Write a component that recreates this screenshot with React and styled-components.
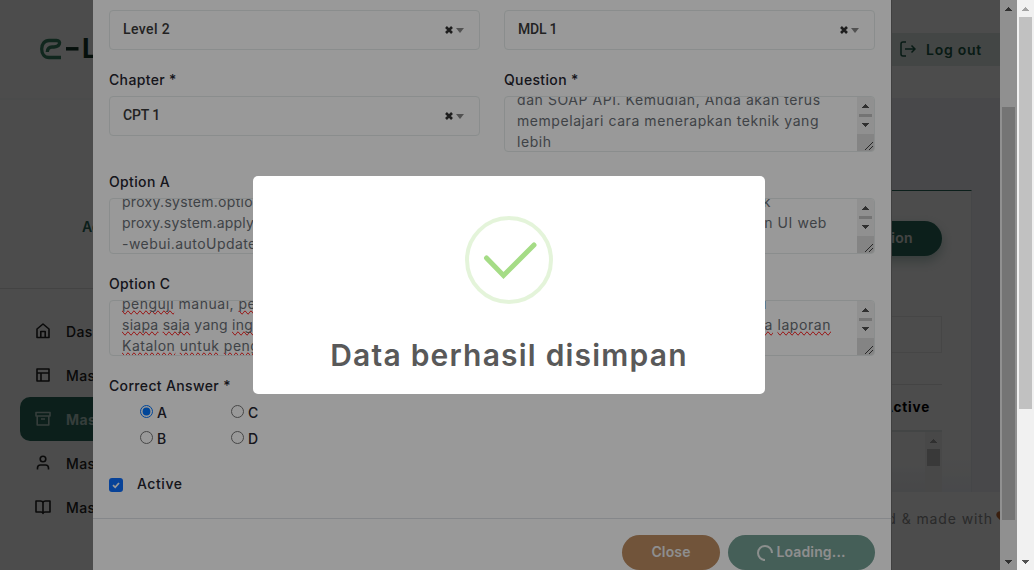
import React from "react";
import styled, { createGlobalStyle, css } from "styled-components";

const brand = "#286b5c";

const GlobalStyle = createGlobalStyle`
  *, *::before, *::after { box-sizing: border-box; }
  html, body { margin: 0; height: 100%; overflow: hidden; background: #fff; }
  body { font-family: Inter, "Liberation Sans", sans-serif; font-size: 14px; color: #222; }
`;

/* ---------- shell ---------- */
const Screen = styled.div`
  display: flex;
  width: 1034px;
  height: 570px;
  overflow: hidden;
`;
const Viewport = styled.div`
  position: relative;
  width: 1017px;
  height: 570px;
  overflow: hidden;
`;
const Backdrop = styled.div`
  position: absolute;
  inset: 0;
  background: rgba(0, 0, 0, ${(p) => p.$alpha});
`;

/* ---------- scrollbars ---------- */
const Track = styled.div`
  display: flex;
  flex-direction: column;
  align-items: center;
  flex: none;
  width: 17px;
  height: ${(p) => p.$height}px;
  background: #f1f1f1;
`;
const ArrowBox = styled.div`
  display: flex;
  align-items: center;
  justify-content: center;
  height: 17px;
  padding-bottom: ${(p) => p.$lift || 0}px;
  flex: none;
  color: ${(p) => p.$color || "#505050"};
  svg { display: block; ${(p) => p.$down && "transform: rotate(180deg);"} }
`;
const Thumb = styled.div`
  width: 13px;
  height: ${(p) => p.$height}px;
  margin-top: ${(p) => p.$top || 0}px;
  background: ${(p) => p.$color || "#c1c1c1"};
`;
const Spacer = styled.div`flex: 1;`;

function Arrow({ down, color, lift }) {
  return (
    <ArrowBox $down={down} $color={color} $lift={lift}>
      <svg width="7" height="4" viewBox="0 0 7 4" fill="currentColor" shapeRendering="crispEdges">
        <path d="M3 0h1v1h1v1h1v1h1v1H0V3h1V2h1V1h1z" />
      </svg>
    </ArrowBox>
  );
}

/* ---------- page behind the modal ---------- */
const Page = styled.div`
  width: 1000px;
  height: 570px;
  display: flex;
  flex-direction: column;
  background: #fff;
`;
const Header = styled.header`
  display: flex;
  justify-content: space-between;
  height: 98px;
  padding: 33px 0 0 40px;
`;
const Logo = styled.div`
  display: flex;
  gap: 3px;
  height: 32px;
  align-items: center;
  font: 700 27px/32px Inter, sans-serif;
  color: #17392b;
  svg { display: block; }
`;
const LogOut = styled.div`
  display: flex;
  align-items: center;
  gap: 10px;
  height: 33px;
  width: 120px;
  padding: 0 0 1px 20px;
  background: #e3ece8;
  color: #1c5a49;
  font-weight: 600;
  font-size: 14px;
  letter-spacing: 0.75px;
`;
const Body = styled.div`
  display: flex;
  height: 394px;
`;
const Sidebar = styled.aside`
  width: 250px;
  flex: none;
  height: 472px;
`;
const UserBlock = styled.div`
  height: 191px;
  padding: 117px 0 0 82px;
  border-top: 2px solid #f8fbfb;
  border-bottom: 1px solid #e2e2e2;
  color: ${brand};
  font-weight: 600;
  line-height: 20px;
`;
const Nav = styled.nav`padding: 20px 0 0 20px;`;
const NavItem = styled.div`
  display: flex;
  align-items: center;
  gap: 15px;
  height: 44px;
  padding-left: 15px;
  border-radius: 10px;
  font-weight: 500;
  letter-spacing: 0.4px;
  color: ${(p) => (p.$active ? "#b4cec7" : "#222")};
  background: ${(p) => (p.$active ? brand : "transparent")};
`;
const Main = styled.main`
  flex: 1;
  padding: 92px 28px 0 0;
  background: #f0f3f8;
`;
const Card = styled.section`
  height: 302px;
  padding: 30px 29px 0 0;
  display: flex;
  flex-direction: column;
  align-items: flex-end;
  border-top: 1px solid ${brand};
  border-right: 1px solid #e6eaf0;
  background: linear-gradient(#fff 265px, #f2f5fa 302px);
`;
const AddButton = styled.div`
  width: 170px;
  height: 35px;
  flex: none;
  padding-right: 29px;
  border-radius: 18px;
  background: ${brand};
  color: #e3e3e3;
  font-weight: 600;
  letter-spacing: 0.3px;
  line-height: 34px;
  text-align: right;
  box-shadow: 0 5px 12px rgba(40, 107, 92, 0.35);
`;
const SearchBox = styled.div`
  width: 200px;
  height: 37px;
  flex: none;
  margin: 60px 0 31px;
  border: 1px solid #ececec;
`;
const TableHead = styled.div`
  width: 200px;
  height: 46px;
  flex: none;
  padding: 12px 12px 0 0;
  border-top: 1px solid #e5e5e5;
  color: #000;
  font-weight: 700;
  font-size: 13.5px;
  letter-spacing: 0.8px;
  line-height: 20px;
  text-align: right;
`;
const TableBody = styled.div`
  display: flex;
  justify-content: flex-end;
  width: 200px;
  height: 62px;
  border-top: 2px solid #e3e8e8;
  background: linear-gradient(#fcfcfc 30px, #eef0f5);
`;
const Footer = styled.footer`
  display: flex;
  align-items: center;
  justify-content: flex-end;
  height: 52px;
  margin-right: -12px;
`;
const FootNote = styled.div`
  display: flex;
  align-items: center;
  gap: 3px;
  flex: none;
  color: #8e8e8e;
  letter-spacing: 0.9px;
  white-space: nowrap;
  svg { flex: none; }
`;

/* ---------- modal ---------- */
const ModalLayer = styled.div`
  position: absolute;
  inset: 0;
  display: flex;
  justify-content: space-between;
  padding-left: 93px;
`;
const Modal = styled.div`
  width: 799px;
  height: 571px;
  background: #fff;
  border-right: 1px solid #6c6c6c;
`;
const Form = styled.div`
  display: grid;
  grid-template-columns: 371px 371px;
  gap: 20px 24px;
  height: 518px;
  padding: 10px 16px 0;
  align-content: start;
`;
const Field = styled.div`
  display: flex;
  flex-direction: column;
  gap: 5px;
`;
const Label = styled.div`
  height: 21px;
  line-height: 19px;
  font-weight: 500;
  color: #25252f;
  letter-spacing: 0.35px;
`;
const SelectBox = styled.div`
  display: flex;
  align-items: center;
  height: 40px;
  padding: 0 15px 2px 13px;
  border: 1px solid #e6eceb;
  border-radius: 4px;
  font: 500 14px Roboto, sans-serif;
  letter-spacing: ${(p) => p.$ls ?? 0}px;
  color: #3a3a3a;
`;
const SelectIcons = styled.div`
  display: flex;
  align-items: center;
  gap: 3px;
  margin-left: auto;
  padding-top: 2px;
`;
const Area = styled.div`
  display: flex;
  height: 56px;
  border: 1px solid #e6eceb;
  border-radius: 4px;
  overflow: hidden;
`;
const AreaText = styled.div`
  flex: 1;
  margin-top: -8px;
  padding-left: 12px;
  font-size: 14px;
  line-height: 21px;
  color: #6a6f76;
  white-space: nowrap;
`;
const Line = styled.div`
  height: 21px;
  letter-spacing: ${(p) => p.$ls ?? 0.56}px;
  ${(p) => p.$end && css`width: ${p.$end}px; text-align: right;`}
`;
const Miss = styled.span`
  text-decoration-line: spelling-error;
`;
const Grip = styled.div`
  display: flex;
  align-items: flex-end;
  justify-content: flex-end;
  width: 17px;
  height: 17px;
  background: #dcdcdc;
  svg { display: block; }
`;
const Answers = styled.div`
  display: grid;
  grid-template-columns: 91px 91px;
  padding-left: 31px;
  margin-top: -3px;
`;
const Answer = styled.label`
  display: flex;
  align-items: center;
  gap: 4px;
  height: 26px;
  font-weight: 500;
  color: #25252f;
  input { width: 13px; height: 13px; margin: 0 0 2px; }
`;
const Check = styled.div`
  display: flex;
  align-items: center;
  gap: 14px;
  height: 21px;
  margin-top: 2px;
  font-weight: 500;
  letter-spacing: 0.55px;
  color: #25252f;
`;
const Tick = styled.div`
  display: flex;
  align-items: center;
  justify-content: center;
  width: 14px;
  height: 14px;
  margin-top: 2px;
  border-radius: 3px;
  background: #0d6efd;
`;
const ModalFooter = styled.div`
  display: flex;
  justify-content: flex-end;
  gap: 8px;
  padding: 16px 16px 0;
  border-top: 1px solid #dee2e6;
`;
const Button = styled.div`
  display: flex;
  align-items: center;
  justify-content: center;
  gap: 3px;
  width: ${(p) => p.$width}px;
  height: 35px;
  padding-bottom: 2px;
  border-radius: 18px;
  background: ${(p) => p.$bg};
  color: #ededed;
  font-weight: 600;
  letter-spacing: 0.15px;
  svg { display: block; margin-top: 2px; }
`;

/* ---------- success dialog ---------- */
const AlertLayer = styled.div`
  position: absolute;
  inset: 0;
  padding: 176px 0 0 253px;
`;
const Alert = styled.div`
  display: flex;
  flex-direction: column;
  align-items: center;
  width: 512px;
  height: 218px;
  padding-top: 40px;
  border-radius: 5px;
  background: #fff;
`;
const AlertTitle = styled.div`
  margin-top: 33px;
  font-size: 30px;
  line-height: 36px;
  font-weight: 600;
  letter-spacing: 1.2px;
  color: #595959;
  white-space: nowrap;
`;

const NavIcon = ({ children }) => (
  <svg width="16" height="18" viewBox="0 0 16 18" fill="none" stroke="currentColor" strokeWidth="1.6" strokeLinejoin="round">
    {children}
  </svg>
);

function Select({ value, ls }) {
  return (
    <SelectBox $ls={ls}>
      {value}
      <SelectIcons>
        <svg width="8" height="8" viewBox="0 0 8 8" stroke="#333" strokeWidth="2.6">
          <path d="M1 1l6 6M7 1L1 7" />
        </svg>
        <svg width="8" height="5" viewBox="0 0 8 5" fill="#888"><path d="M0 0h8L4 5z" /></svg>
      </SelectIcons>
    </SelectBox>
  );
}

function TextArea({ children }) {
  return (
    <Area>
      <AreaText>{children}</AreaText>
      <Track $height={54}>
        <Arrow />
        <Thumb $height={3} />
        <Arrow down lift={2} />
        <Grip>
          <svg width="10" height="10" viewBox="0 0 10 10" stroke="#444" strokeWidth="1" shapeRendering="crispEdges">
            <path d="M1 9L9 1M5 9L9 5" />
          </svg>
        </Grip>
      </Track>
    </Area>
  );
}

export default function App() {
  return (
    <Screen>
      <GlobalStyle />
      <Viewport>
        <Page>
          <Header>
            <Logo>
              <svg width="39" height="22" viewBox="0 0 39 22" fill="none">
                <path d="M21 19.500H9C4.500 19.500 1.700 16 1.700 11S4.500 2.500 9 2.500H16.500C19 2.500 20.200 4.200 19.300 6.200C18.400 8.400 17 9 14 9H12C9 9 7.500 11 7.300 14" stroke="#3a8466" strokeWidth="3.300" />
                <path d="M26 10.800H38.500" stroke="#17392b" strokeWidth="3.500" />
              </svg>
              L
            </Logo>
            <LogOut>
              <svg width="16" height="16" viewBox="0 0 16 16" fill="none" stroke="currentColor" strokeWidth="1.500">
                <path d="M6 1H3Q1 1 1 3V13Q1 15 3 15H6M5 8H15M11.500 4.500L15 8L11.500 11.500" />
              </svg>
              Log out
            </LogOut>
          </Header>
          <Body>
            <Sidebar>
              <UserBlock>Admin</UserBlock>
              <Nav>
                <NavItem>
                  <NavIcon><path d="M2 7L8 2L14 7V15.500H2zM5.800 15.500V9.500H10.200V15.500" /></NavIcon>
                  Dashboard
                </NavItem>
                <NavItem>
                  <NavIcon><path d="M2 3H14V15H2zM2 7H14M6 7V15" /></NavIcon>
                  Master
                </NavItem>
                <NavItem $active>
                  <NavIcon><path d="M1 2.500H15V6H1zM2.200 6V15H13.800V6M6 9H10" /></NavIcon>
                  <b>Master</b>
                </NavItem>
                <NavItem>
                  <NavIcon><circle cx="8" cy="5" r="2.800" /><path d="M2.500 15.500V14Q2.500 11 5.500 11H10.500Q13.500 11 13.500 14V15.500" /></NavIcon>
                  Master
                </NavItem>
                <NavItem>
                  <NavIcon><path d="M8 4.500Q7.500 3 5.500 3H1V14H6Q8 14 8 15.500Q8 14 10 14H15V3H10.500Q8.500 3 8 4.500V15" /></NavIcon>
                  Master
                </NavItem>
              </Nav>
            </Sidebar>
            <Main>
              <Card>
                <AddButton>Question</AddButton>
                <SearchBox />
                <TableHead>Active</TableHead>
                <TableBody>
                  <Track $height={60}>
                    <Arrow color="#a0a0a0" />
                    <Thumb $height={17} />
                  </Track>
                </TableBody>
              </Card>
            </Main>
          </Body>
          <Footer>
            <FootNote>
              crafted &amp; made with
              <svg width="16" height="14" viewBox="0 0 16 14" fill="#c26b35"><path d="M8 13L1 6Q-1 2 2.500 .5Q6 -.5 8 3Q10 -.5 13.500 .5Q17 2 15 6z" /></svg>
            </FootNote>
          </Footer>
        </Page>

        <Backdrop $alpha={0.5} />
        <ModalLayer>
          <Modal>
            <Form>
              <Select value="Level 2" ls={0.4} />
              <Select value="MDL 1" ls={-0.2} />

              <Field>
                <Label>Chapter *</Label>
                <Select value="CPT 1" ls={-0.1} />
              </Field>
              <Field>
                <Label>Question *</Label>
                <TextArea>
                  <Line>dan SOAP API. Kemudian, Anda akan terus</Line>
                  <Line>mempelajari cara menerapkan teknik yang</Line>
                  <Line>lebih</Line>
                </TextArea>
              </Field>

              <Field>
                <Label>Option A</Label>
                <TextArea>
                  <Line $ls={0.3}>proxy.system.option</Line>
                  <Line $ls={0.2}>proxy.system.apply</Line>
                  <Line $ls={0.45}>-webui.autoUpdate</Line>
                </TextArea>
              </Field>
              <Field>
                <Label>Option B</Label>
                <TextArea>
                  <Line $end={254}>untuk</Line>
                  <Line $end={310}>dan UI web</Line>
                </TextArea>
              </Field>

              <Field>
                <Label>Option C</Label>
                <TextArea>
                  <Line $ls={0.5}><Miss>penguji</Miss> manual, <Miss>penguji</Miss></Line>
                  <Line $ls={0.25}><Miss>siapa</Miss> <Miss>saja</Miss> yang <Miss>ingin</Miss></Line>
                  <Line $ls={0.5}><Miss>Katalon</Miss> <Miss>untuk</Miss> <Miss>penguji</Miss></Line>
                </TextArea>
              </Field>
              <Field>
                <Label>Option D</Label>
                <TextArea>
                  <Line $end={250}>dari</Line>
                  <Line $end={314}><Miss>pada</Miss> <Miss>laporan</Miss></Line>
                </TextArea>
              </Field>

              <Field>
                <Label>Correct Answer *</Label>
                <Answers>
                  <Answer><input type="radio" name="answer" defaultChecked />A</Answer>
                  <Answer><input type="radio" name="answer" />C</Answer>
                  <Answer><input type="radio" name="answer" />B</Answer>
                  <Answer><input type="radio" name="answer" />D</Answer>
                </Answers>
              </Field>
              <div />
              <Check>
                <Tick>
                  <svg width="8" height="8" viewBox="0 0 8 8" fill="none" stroke="#fff" strokeWidth="1.800"><path d="M1 4.200L3.200 6.300L7 2" /></svg>
                </Tick>
                Active
              </Check>
            </Form>
            <ModalFooter>
              <Button $width={98} $bg="#bc8c61">Close</Button>
              <Button $width={147} $bg="#739e93">
                <svg width="16" height="16" viewBox="0 0 16 16" fill="none" stroke="#e8eeec" strokeWidth="2">
                  <path d="M8 15A7 7 0 1 1 15 8" />
                </svg>
                Loading...
              </Button>
            </ModalFooter>
          </Modal>
          <Track $height={570}>
            <Arrow />
            <Thumb $top={90} $height={413} />
            <Spacer />
            <Arrow down />
          </Track>
        </ModalLayer>

        <Backdrop $alpha={0.4} />
        <AlertLayer>
          <Alert>
            <svg width="88" height="88" viewBox="0 0 88 88" fill="none">
              <circle cx="44" cy="44" r="42" stroke="#a5dc86" strokeOpacity="0.3" strokeWidth="4" />
              <path d="M21.500 42L38.500 59.500L69 29" stroke="#a5dc86" strokeWidth="5" strokeLinecap="round" />
            </svg>
            <AlertTitle>Data berhasil disimpan</AlertTitle>
          </Alert>
        </AlertLayer>
      </Viewport>
      <Track $height={570}>
        <Arrow color="#a3a3a3" />
        <Thumb $height={392} />
        <Spacer />
        <Arrow down />
      </Track>
    </Screen>
  );
}
